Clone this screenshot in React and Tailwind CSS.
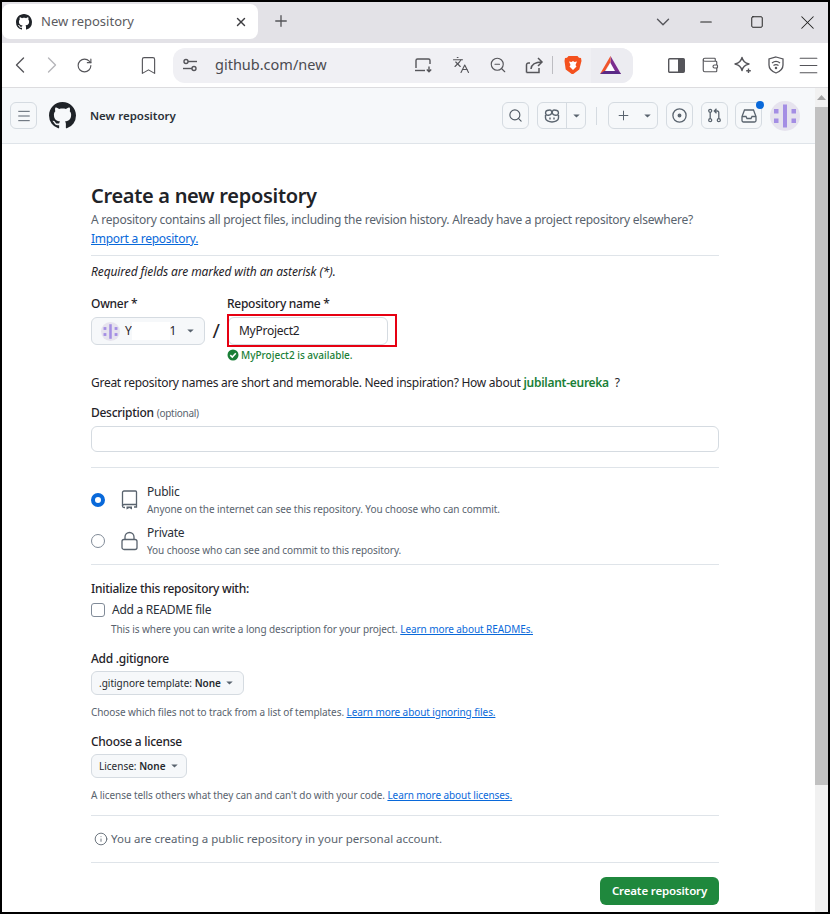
import React from 'react';
import { ChevronLeft, ChevronRight, RotateCw, Bookmark, Languages, ZoomOut, Plus, X, Minus, Square, ChevronDown, Menu, Search, Wallet, Info } from 'lucide-react';

const GH = "M8 0c4.42 0 8 3.58 8 8a8.013 8.013 0 0 1-5.45 7.59c-.4.08-.55-.17-.55-.38 0-.27.01-1.13.01-2.2 0-.75-.25-1.23-.54-1.48 1.78-.2 3.65-.88 3.65-3.95 0-.88-.31-1.59-.82-2.15.08-.2.36-1.02-.08-2.12 0 0-.67-.22-2.2.82-.64-.18-1.32-.27-2-.27-.68 0-1.36.09-2 .27-1.53-1.03-2.2-.82-2.2-.82-.44 1.1-.16 1.92-.08 2.12-.51.56-.82 1.28-.82 2.15 0 3.06 1.86 3.75 3.64 3.95-.23.2-.44.55-.51 1.07-.46.21-1.61.55-2.33-.66-.15-.24-.6-.83-1.23-.82-.67.01-.27.38.01.53.34.19.73.9.82 1.13.16.45.68 1.31 2.69.94 0 .67.01 1.3.01 1.49 0 .21-.15.45-.55.38A7.995 7.995 0 0 1 0 8c0-4.42 3.58-8 8-8Z";

const Mark = ({ s }) => (
  <svg width={s} height={s} viewBox="0 0 16 16" fill="#1f2328"><path d={GH} /></svg>
);

const Avatar = ({ s }) => (
  <svg width={s} height={s} viewBox="0 0 30 30">
    <circle cx="15" cy="15" r="15" fill="#e6e3ee" />
    <rect x="13" y="3.500" width="4" height="23" fill="#a48ee4" />
    <rect x="4" y="8" width="4.500" height="4.500" fill="#a48ee4" />
    <rect x="4" y="17.500" width="4.500" height="4.500" fill="#a48ee4" />
    <rect x="21.500" y="8" width="4.500" height="4.500" fill="#a48ee4" />
    <rect x="21.500" y="17.500" width="4.500" height="4.500" fill="#a48ee4" />
  </svg>
);

const Caret = ({ c = '#59636e' }) => (
  <svg width="7" height="4" viewBox="0 0 8 5" fill={c}><path d="M0 0.500h8L4 4.500z" /></svg>
);

const TB = ({ w = 'w-[33px]', children }) => (
  <div className={`${w} h-[24px] flex items-center justify-center shrink-0`}>{children}</div>
);

const Hr = ({ className }) => <div className={`h-px bg-[#dfe4e9] ${className}`} />;

const HBtn = ({ className, children }) => (
  <div className={`h-[27px] border border-[#d5dbe1] rounded-[6px] flex items-center justify-center shrink-0 ${className}`}>{children}</div>
);

const A = ({ children }) => <span className="text-[#0969da] underline">{children}</span>;

const Line = ({ className = '', children }) => (
  <div className={`h-[18px] pt-px leading-[18px] whitespace-nowrap ${className}`}>{children}</div>
);

const Sel = ({ className, children }) => (
  <div className={`h-[24px] bg-[#f6f8fa] border border-[#d5dbe1] rounded-[6px] flex items-center pl-[7px] text-[10px] tracking-normal text-[#25292e] whitespace-nowrap ${className}`}>
    {children}
    <span className="ml-[5px]"><Caret /></span>
  </div>
);

export default function App() {
  return (
    <div className="w-[830px] h-[914px] border-2 border-black bg-white overflow-hidden flex flex-col font-['Noto_Sans','Open_Sans',sans-serif] text-[#1f2328]">
      {/* tab strip */}
      <div className="h-[41px] bg-[#e3e2e7] flex items-start shrink-0">
        <div className="w-[256px] h-[35px] mt-[2px] bg-white rounded-[8px] flex items-center pl-[14px] pr-[10px]">
          <Mark s={16} />
          <span className="ml-[9px] text-[13px] text-[#5b5b5f]">New repository</span>
          <X size={14} strokeWidth={2.400} color="#3c3c40" className="ml-auto" />
        </div>
        <div className="ml-[14px] mt-[10px]"><Plus size={18} strokeWidth={1.800} color="#55555a" /></div>
        <div className="ml-auto mt-[8px] flex items-center">
          <TB w="w-[22px]"><ChevronDown size={22} strokeWidth={1.500} color="#55555a" /></TB>
          <TB w="w-[44px] ml-[10px]"><Minus size={18} strokeWidth={1.500} color="#222" /></TB>
          <TB w="w-[58px]"><Square size={14} strokeWidth={1.700} color="#222" /></TB>
          <TB w="w-[42px]"><X size={23} strokeWidth={1.100} color="#222" /></TB>
        </div>
      </div>
      {/* toolbar */}
      <div className="h-[44px] bg-white flex items-center pl-[2px] shrink-0">
        <TB w="w-[32px]"><ChevronLeft size={28} strokeWidth={1.200} color="#55555a" /></TB>
        <TB w="w-[32px]"><ChevronRight size={28} strokeWidth={1.200} color="#b6b6ba" /></TB>
        <TB w="w-[33px]"><RotateCw size={17} strokeWidth={1.600} color="#55555a" /></TB>
        <TB w="w-[32px]"><span className="ml-[62px]"><Bookmark size={21} strokeWidth={1.300} color="#55555a" /></span></TB>
        <div className="ml-[40px] w-[460px] h-[35px] bg-[#f0f0f4] rounded-[12px] flex items-center pl-[6px] shrink-0">
          <TB w="w-[22px]">
            <svg width="16" height="16" viewBox="0 0 16 16" fill="none" stroke="#55555a" strokeWidth="1.400">
              <circle cx="4" cy="4.500" r="2" /><path d="M6 4.500h9" /><circle cx="12" cy="11.500" r="2" /><path d="M1 11.500h9" />
            </svg>
          </TB>
          <span className="ml-[14px] text-[14.500px] text-[#4b4b50]">github.com/new</span>
          <div className="ml-auto flex items-center">
            <TB w="w-[37px]">
              <svg width="19" height="17" viewBox="0 0 19 17" fill="none" stroke="#55555a" strokeWidth="1.400">
                <path d="M2 11V3.500A1.500 1.500 0 0 1 3.500 2h11A1.500 1.500 0 0 1 16 3.500V7" /><path d="M1 13.500h10" /><path d="M15 9.500v5M12.800 12.500l2.200 2.200 2.200-2.200" />
              </svg>
            </TB>
            <TB w="w-[37px]"><Languages size={18} strokeWidth={1.500} color="#55555a" /></TB>
            <TB w="w-[38px]"><ZoomOut size={18} strokeWidth={1.500} color="#55555a" /></TB>
            <TB w="w-[35px]">
              <svg width="19" height="18" viewBox="0 0 19 18" fill="none" stroke="#55555a" strokeWidth="1.500">
                <path d="M1.500 16.500V9A2 2 0 0 1 3.500 7H5" /><path d="M1.500 16.500H14V12" /><path d="M6 13c.5-5 4-7 11-7M13 2l4 4-4 4" />
              </svg>
            </TB>
            <div className="w-px h-[18px] bg-[#bdbdc2] mr-[2px]" />
            <TB w="w-[36px]">
              <svg width="18" height="20" viewBox="0 0 18 20">
                <path d="M4.500 1h9l1.500 1.700 2 .3.500 3-2.200 8.500-6 4.500h-1.600l-6-4.500L.5 6 1 3l2-.3z" fill="#f4511e" />
                <path d="M5 6.500l2.500.4L9 6l1.500.9 2.500-.4-1.500 3.500 1 1.500-3.500 3.500-3.500-3.500 1-1.500z" fill="#fff" />
              </svg>
            </TB>
            <div className="w-[42px] h-[35px] pr-[4px] bg-[#ececf1] rounded-r-[12px] flex items-center justify-center">
              <svg width="21" height="18" viewBox="0 0 21 18">
                <path d="M10.500 0L21 18h-6L10.500 9z" fill="#7b2d8e" />
                <path d="M10.500 0L0 18l5-3 5.500-9z" fill="#f0542b" />
                <path d="M0 18h21l-3-3H4z" fill="#5a2a86" />
                <path d="M10.500 7l4.500 8H6z" fill="#fff" />
              </svg>
            </div>
          </div>
        </div>
        <div className="ml-[27px] flex items-center">
          <TB>
            <svg width="17" height="15" viewBox="0 0 17 15"><rect x=".7" y=".7" width="15.600" height="13.600" rx="1" fill="none" stroke="#55555a" strokeWidth="1.400" /><rect x="10" y="1" width="6" height="13" fill="#55555a" /></svg>
          </TB>
          <TB><Wallet size={18} strokeWidth={1.500} color="#55555a" /></TB>
          <TB>
            <svg width="18" height="18" viewBox="0 0 18 18" fill="none" stroke="#55555a" strokeWidth="1.400" strokeLinejoin="round">
              <path d="M8 1.500C8.800 5 10.500 7 15 8c-4.500 1-6.200 3-7 6.500C7.200 11 5.500 9 1 8c4.500-1 6.200-3 7-6.500z" /><path d="M14.500 12.500v4.500M12.200 14.700h4.600" />
            </svg>
          </TB>
          <TB>
            <svg width="16" height="18" viewBox="0 0 16 18" fill="none" stroke="#55555a" strokeWidth="1.300">
              <path d="M8 1l7 2v6c0 4-3 6.500-7 8-4-1.500-7-4-7-8V3z" /><path d="M4 7c2.500-2 5.500-2 8 0M5.500 9.500c1.500-1 3.500-1 5 0" /><circle cx="8" cy="12" r=".6" fill="#55555a" />
            </svg>
          </TB>
          <TB><Menu size={25} strokeWidth={1.100} color="#55555a" /></TB>
        </div>
      </div>
      <div className="h-px bg-[#dcdcdf] shrink-0" />
      {/* page + scrollbar */}
      <div className="flex flex-1 min-h-0">
        <div className="flex-1 min-w-0 flex flex-col">
          {/* GitHub header */}
          <div className="h-[55px] bg-[#f6f8fa] flex items-center pl-[8px] pr-[15px] shrink-0">
            <HBtn className="w-[27px]"><Menu size={16} strokeWidth={1.500} color="#59636e" /></HBtn>
            <span className="ml-[12px]"><Mark s={27} /></span>
            <span className="ml-[14px] pt-px text-[11.500px] font-semibold text-[#2a3038]">New repository</span>
            <div className="ml-auto flex items-center">
              <HBtn className="w-[27px]"><Search size={15} strokeWidth={1.800} color="#4f5964" /></HBtn>
              <HBtn className="w-[49px] ml-[8px]">
                <div className="w-[28px] flex justify-center">
                  <svg width="16" height="14" viewBox="0 0 16 14" fill="none" stroke="#59636e" strokeWidth="1.400">
                    <path d="M1.500 6v3C1.500 11.500 5 13 8 13s6.500-1.500 6.500-4V6" />
                    <path d="M3 1.500c-1.500.5-1.800 2.500-1 3.800S6 6.500 7.200 5 7.500 1 6 1 4 1 3 1.500zM13 1.500c1.500.5 1.800 2.500 1 3.800S10 6.500 8.800 5 8.500 1 10 1s2 0 3 .5z" />
                    <path d="M6 8.500v2M10 8.500v2" />
                  </svg>
                </div>
                <div className="w-px self-stretch bg-[#d5dbe1]" />
                <div className="flex-1 flex justify-center"><Caret /></div>
              </HBtn>
              <div className="w-px h-[18px] bg-[#d5dbe1] ml-[10px]" />
              <HBtn className="w-[50px] ml-[11px] gap-[13px]">
                <Plus size={15} strokeWidth={1.600} color="#59636e" />
                <Caret />
              </HBtn>
              <HBtn className="w-[27px] ml-[8px]">
                <svg width="15" height="15" viewBox="0 0 15 15" fill="none" stroke="#59636e" strokeWidth="1.300"><circle cx="7.500" cy="7.500" r="6.600" /><circle cx="7.500" cy="7.500" r="1.300" fill="#59636e" /></svg>
              </HBtn>
              <HBtn className="w-[27px] ml-[8px]">
                <svg width="15" height="15" viewBox="0 0 15 15" fill="none" stroke="#59636e" strokeWidth="1.300">
                  <circle cx="3.200" cy="2.800" r="1.500" /><circle cx="3.200" cy="12.200" r="1.500" /><path d="M3.200 4.300v6.400" /><circle cx="11.800" cy="12.200" r="1.500" /><path d="M11.800 10.700V4.500A1.500 1.500 0 0 0 10.300 3H8M9.500 .8L7.300 3l2.200 2.200" />
                </svg>
              </HBtn>
              <div className="relative ml-[7px]">
                <HBtn className="w-[27px]">
                  <svg width="16" height="14" viewBox="0 0 16 14" fill="none" stroke="#59636e" strokeWidth="1.300">
                    <path d="M3.500 1h9l2.500 6.500V11.500A1.500 1.500 0 0 1 13.500 13h-11A1.500 1.500 0 0 1 1 11.500V7.500z" /><path d="M1 7.500h4l1 2h4l1-2h4" />
                  </svg>
                </HBtn>
                <div className="absolute -top-px -right-[2px] w-[8px] h-[8px] rounded-full bg-[#0969da]" />
              </div>
              <span className="ml-[8px]"><Avatar s={30} /></span>
            </div>
          </div>
          <div className="h-px bg-[#dfe4e9] shrink-0" />
          {/* form */}
          <div className="flex-1 min-h-0 overflow-hidden pl-[89px] pt-[37px]">
            <div className="w-[628px] text-[12px] tracking-[-0.27px]">
              <h1 className="h-[29px] leading-[29px] text-[20px] font-semibold text-[#1f2328] tracking-[-0.3px]">Create a new repository</h1>
              <Line className="text-[#59636e] tracking-[-0.24px]">A repository contains all project files, including the revision history. Already have a project repository elsewhere?</Line>
              <Line className="mt-px"><A>Import a repository.</A></Line>
              <Hr className="mt-[8px]" />
              <Line className="mt-[6px] italic tracking-[-0.1px]">Required fields are marked with an asterisk (*).</Line>
              <div className="mt-[14px] flex items-start">
                <div className="w-[114px]">
                  <Line className="font-medium">Owner *</Line>
                  <div className="mt-[5px] h-[28px] bg-[#f6f8fa] border border-[#d5dbe1] rounded-[6px] flex items-center pl-[9px]">
                    <Avatar s={19} />
                    <span className="ml-[5px]">Y</span>
                    <div className="w-[38px] h-[18px] bg-white" />
                    <span>1</span>
                    <span className="ml-[11px]"><Caret /></span>
                  </div>
                </div>
                <span className="w-[22px] mt-[23px] text-center text-[20px] leading-[28px] text-[#1f2328]">/</span>
                <div className="relative">
                  <Line className="font-medium">Repository name *</Line>
                  <div className="mt-[5px] ml-px w-[160px] h-[28px] border border-[#d5dbe1] rounded-[6px] flex items-center pl-[10px]">MyProject2</div>
                  <div className="absolute left-0 top-[20px] w-[170px] h-[33px] border-2 border-[#e60012]" />
                  <div className="mt-px h-[18px] flex items-center text-[10px] tracking-normal font-medium text-[#1a7f37]">
                    <svg width="12" height="12" viewBox="0 0 12 12"><circle cx="6" cy="6" r="5.500" fill="#1a7f37" /><path d="M3.300 6.100l2 2 3.500-3.800" fill="none" stroke="#fff" strokeWidth="1.500" /></svg>
                    <span className="ml-[2px]">MyProject2 is available.</span>
                  </div>
                </div>
              </div>
              <Line className="mt-[9px]">Great repository names are short and memorable. Need inspiration? How about <span className="font-semibold text-[#1a7f37]">jubilant-eureka</span> <span className="ml-[3px]">?</span></Line>
              <Line className="mt-[12px] font-medium">Description <span className="text-[10px] font-normal text-[#59636e]">(optional)</span></Line>
              <div className="mt-[5px] h-[26px] border border-[#d5dbe1] rounded-[6px]" />
              <Hr className="mt-[15px]" />
              <div className="mt-[14px] h-[35px] flex items-center">
                <div className="w-[14px] h-[14px] rounded-full border-[4px] border-[#0969da] bg-white" />
                <div className="ml-[16px] w-[26px]">
                  <svg width="17" height="20" viewBox="0 0 17 20" fill="none" stroke="#59636e" strokeWidth="1.300">
                    <path d="M1.500 16V2.500A1.500 1.500 0 0 1 3 1h11.500A1 1 0 0 1 15.500 2V17h-2.500" /><path d="M1.500 16A1.500 1.500 0 0 1 3 14.500h12.500" /><path d="M1.500 16c0 .8.700 1.500 1.500 1.500h1" />
                    <path d="M5.500 16.500h5.500v3l-2.700-1.500-2.800 1.500z" fill="#59636e" stroke="none" />
                  </svg>
                </div>
                <div>
                  <Line className="text-[#2a3038]">Public</Line>
                  <Line className="-mt-px text-[10px] tracking-[-0.07px] text-[#59636e]">Anyone on the internet can see this repository. You choose who can commit.</Line>
                </div>
              </div>
              <div className="mt-[6px] h-[35px] flex items-center">
                <div className="w-[14px] h-[14px] rounded-full border border-[#818b98] bg-white" />
                <div className="ml-[16px] w-[26px]">
                  <svg width="17" height="20" viewBox="0 0 17 20" fill="none" stroke="#59636e" strokeWidth="1.300">
                    <rect x="1" y="8.500" width="15" height="10" rx="2" /><path d="M4 8.500V6a4.500 4.500 0 0 1 9 0v2.500" />
                  </svg>
                </div>
                <div>
                  <Line className="text-[#2a3038]">Private</Line>
                  <Line className="-mt-px text-[10px] tracking-[-0.07px] text-[#59636e]">You choose who can see and commit to this repository.</Line>
                </div>
              </div>
              <Hr className="mt-[6px]" />
              <Line className="mt-[14px] font-medium">Initialize this repository with:</Line>
              <div className="mt-[3px] h-[18px] pt-px flex items-center">
                <div className="w-[14px] h-[14px] rounded-[3px] border border-[#818b98] bg-white" />
                <span className="ml-[7px] text-[#2a3038]">Add a README file</span>
              </div>
              <Line className="mt-px ml-[20px] text-[10px] tracking-[-0.08px] text-[#59636e]">This is where you can write a long description for your project. <A>Learn more about READMEs.</A></Line>
              <Line className="mt-[12px] font-medium">Add .gitignore</Line>
              <Sel className="mt-[4px] w-[153px]">.gitignore template:&nbsp;<b className="font-semibold">None</b></Sel>
              <Line className="mt-[7px] text-[10px] tracking-[-0.08px] text-[#59636e]">Choose which files not to track from a list of templates. <A>Learn more about ignoring files.</A></Line>
              <Line className="mt-[12px] font-medium">Choose a license</Line>
              <Sel className="mt-[4px] w-[96px]">License:&nbsp;<b className="font-semibold">None</b></Sel>
              <Line className="mt-[7px] text-[10px] tracking-[-0.08px] text-[#59636e]">A license tells others what they can and can't do with your code. <A>Learn more about licenses.</A></Line>
              <Hr className="mt-[12px]" />
              <div className="mt-[14px] h-[18px] flex items-center text-[#59636e] pl-[3px]">
                <Info size={14} strokeWidth={1.500} color="#59636e" />
                <span className="ml-[3px] text-[11.500px] tracking-normal">You are creating a public repository in your personal account.</span>
              </div>
              <Hr className="mt-[14px]" />
              <div className="mt-[14px] flex justify-end">
                <div className="w-[119px] h-[28px] rounded-[6px] bg-[#1f883d] text-white font-semibold text-[11.500px] tracking-[-0.15px] flex items-center justify-center">Create repository</div>
              </div>
            </div>
          </div>
        </div>
        {/* scrollbar */}
        <div className="w-[13px] bg-[#f1f1f1] flex flex-col items-center shrink-0">
          <div className="h-[19px] flex items-center"><svg width="9" height="5" viewBox="0 0 9 5" fill="#a3a3a3"><path d="M0 5L4.500 0 9 5z" /></svg></div>
          <div className="w-full h-[678px] bg-[#c1c1c1]" />
        </div>
      </div>
    </div>
  );
}
